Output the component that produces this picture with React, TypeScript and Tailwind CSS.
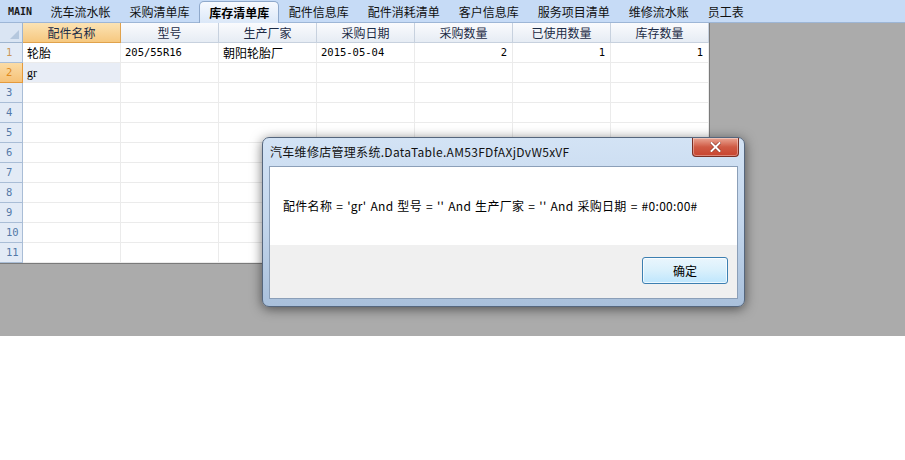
import React from 'react';

const tabs = ['洗车流水帐', '采购清单库', '库存清单库', '配件信息库', '配件消耗清单', '客户信息库', '服务项目清单', '维修流水账', '员工表'];
const columns = ['配件名称', '型号', '生产厂家', '采购日期', '采购数量', '已使用数量', '库存数量'];

type Cell = { text: string; align?: 'left' | 'right'; kind?: 'cjk' | 'mono' | 'serif' };

const rows: Cell[][] = [
  [
    { text: '轮胎', kind: 'cjk' },
    { text: '205/55R16', kind: 'mono' },
    { text: '朝阳轮胎厂', kind: 'cjk' },
    { text: '2015-05-04', kind: 'mono' },
    { text: '2', align: 'right', kind: 'mono' },
    { text: '1', align: 'right', kind: 'mono' },
    { text: '1', align: 'right', kind: 'mono' }
  ],
  [{ text: 'gr', kind: 'serif' }, { text: '' }, { text: '' }, { text: '' }, { text: '' }, { text: '' }, { text: '' }]
];

const cjk = "font-['Noto_Sans_CJK_SC',sans-serif]";

const TabBar: React.FC = () => (
  <div className="flex h-[23px] items-end bg-[#c6dbf6] border-b border-[#9db6d6]">
    <div className="flex h-[21px] items-center px-[8px] pr-[9px] font-['DejaVu_Sans_Mono',monospace] text-[10px] font-bold text-[#1a1a1a]">
      MAIN
    </div>
    {tabs.map((t) => {
      const active = t === '库存清单库';
      return (
        <div
          key={t}
          className={
            active
              ? `flex h-[22px] mb-[-1px] items-center px-[9px] rounded-t-[5px] border border-b-0 border-[#8fa9cb] bg-gradient-to-b from-[#f6f9fe] to-[#dbe8f8] ${cjk} text-[12px] font-bold text-black`
              : `flex h-[21px] items-center px-[9.5px] ${cjk} text-[12px] text-[#111]`
          }
        >
          {t}
        </div>
      );
    })}
  </div>
);

const Grid: React.FC = () => (
  <div className="w-[710px] border-r border-b border-[#7a7a7a] bg-white">
    <div className="grid grid-cols-[23px_repeat(7,98px)]">
      {/* header row */}
      <div className="relative h-[20px] bg-[#dae5f3] border-r border-b border-[#9fb5cf]">
        <div className="absolute right-[3px] bottom-[3px] h-0 w-0 [border-right:9px_solid_#b5c8de] [border-top:9px_solid_transparent]" />
      </div>
      {columns.map((c, i) => (
        <div
          key={c}
          className={
            i === 0
              ? `flex h-[20px] items-center justify-center border-r border-b border-[#e0a24c] bg-gradient-to-b from-[#fbe3b4] to-[#f6c87f] ${cjk} text-[12px] text-[#1c2b45]`
              : `flex h-[20px] items-center justify-center border-r border-b border-[#c7d1de] bg-gradient-to-b from-[#fafbfd] to-[#e6ecf4] ${cjk} text-[12px] text-[#1c2b45]`
          }
        >
          {c}
        </div>
      ))}
      {/* body rows */}
      {Array.from({ length: 11 }).map((_, r) => {
        const data = rows[r];
        const current = r === 1;
        return (
          <React.Fragment key={r}>
            <div
              className={
                current
                  ? "flex h-[20px] items-center pl-[6px] border-r border-b border-[#e49a3c] bg-gradient-to-b from-[#fbdca6] to-[#f6c278] font-['DejaVu_Sans_Mono',monospace] text-[10.5px] text-[#e08a1e]"
                  : `flex h-[20px] items-center pl-[6px] border-r border-b border-[#a9bdd6] bg-[#e3ebf6] font-['DejaVu_Sans_Mono',monospace] text-[10.5px] ${r === 0 ? 'text-[#c9975a]' : 'text-[#5479a8]'}`
              }
            >
              {r + 1}
            </div>
            {Array.from({ length: 7 }).map((__, c) => {
              const cell = data ? data[c] : undefined;
              const font =
                cell?.kind === 'mono'
                  ? "font-['DejaVu_Sans_Mono',monospace] text-[10.5px]"
                  : cell?.kind === 'serif'
                  ? "font-['Liberation_Serif',serif] text-[12px]"
                  : `${cjk} text-[12px]`;
              return (
                <div
                  key={c}
                  className={`flex h-[20px] items-center border-r border-b border-[#ebebeb] px-[4px] ${
                    cell?.align === 'right' ? 'justify-end pr-[5px]' : 'justify-start'
                  } ${current && c === 0 ? 'bg-[#e8edf6]' : 'bg-white'} ${font} text-black`}
                >
                  {cell?.text}
                </div>
              );
            })}
          </React.Fragment>
        );
      })}
    </div>
  </div>
);

const MessageBox: React.FC = () => (
  <div className="absolute left-[262px] top-[137px] w-[483px] h-[170px] rounded-[7px] border border-[#55667d] bg-gradient-to-b from-[#d3e3f5] via-[#c3d6ec] to-[#a9c0db] shadow-[0_2px_12px_rgba(0,0,0,0.55)]">
    <div className={`absolute left-[7px] top-[6px] ${cjk} text-[12px] tracking-[0.3px] text-[#111] leading-[16px]`}>
      汽车维修店管理系统.DataTable.AM53FDfAXjDvW5xVF
    </div>
    <div className="absolute right-[5px] top-[0px] flex h-[19px] w-[47px] items-center justify-center rounded-b-[4px] border border-t-0 border-[#7a2f24] bg-gradient-to-b from-[#e9a594] via-[#cf5a44] to-[#c8442f] shadow-[inset_0_0_0_1px_rgba(255,255,255,0.35)]">
      <svg width="11" height="10" viewBox="0 0 11 10">
        <path d="M1.5 1 L9.5 9 M9.5 1 L1.5 9" stroke="#8a3526" strokeWidth="3.2" strokeLinecap="square" />
        <path d="M1.5 1 L9.5 9 M9.5 1 L1.5 9" stroke="#ffffff" strokeWidth="2" strokeLinecap="square" />
      </svg>
    </div>
    <div className="absolute left-[6px] right-[6px] top-[28px] bottom-[7px] flex flex-col border border-[#8b9fb8]">
      <div className={`flex h-[78px] items-center bg-white pl-[13px] ${cjk} text-[12px] tracking-[0.3px] [word-spacing:1px] text-black`}>
        配件名称 = 'gr' And 型号 = '' And 生产厂家 = '' And 采购日期 = #0:00:00#
      </div>
      <div className="flex flex-1 items-start justify-end bg-[#f0f0f0] pt-[12px] pr-[9px]">
        <div className="flex h-[27px] w-[86px] items-center justify-center rounded-[3px] border border-[#3c7fb1] bg-gradient-to-b from-[#eaf6fd] via-[#d9f0fc] to-[#bee6fd] shadow-[inset_0_0_0_1px_rgba(255,255,255,0.7)]">
          <span className={`${cjk} text-[12px] text-black`}>确定</span>
        </div>
      </div>
    </div>
  </div>
);

export default function App() {
  return (
    <div className="relative h-[460px] w-[905px] overflow-hidden bg-white">
      <TabBar />
      <div className="h-[313px] bg-[#ababab]">
        <Grid />
      </div>
      <MessageBox />
    </div>
  );
}
